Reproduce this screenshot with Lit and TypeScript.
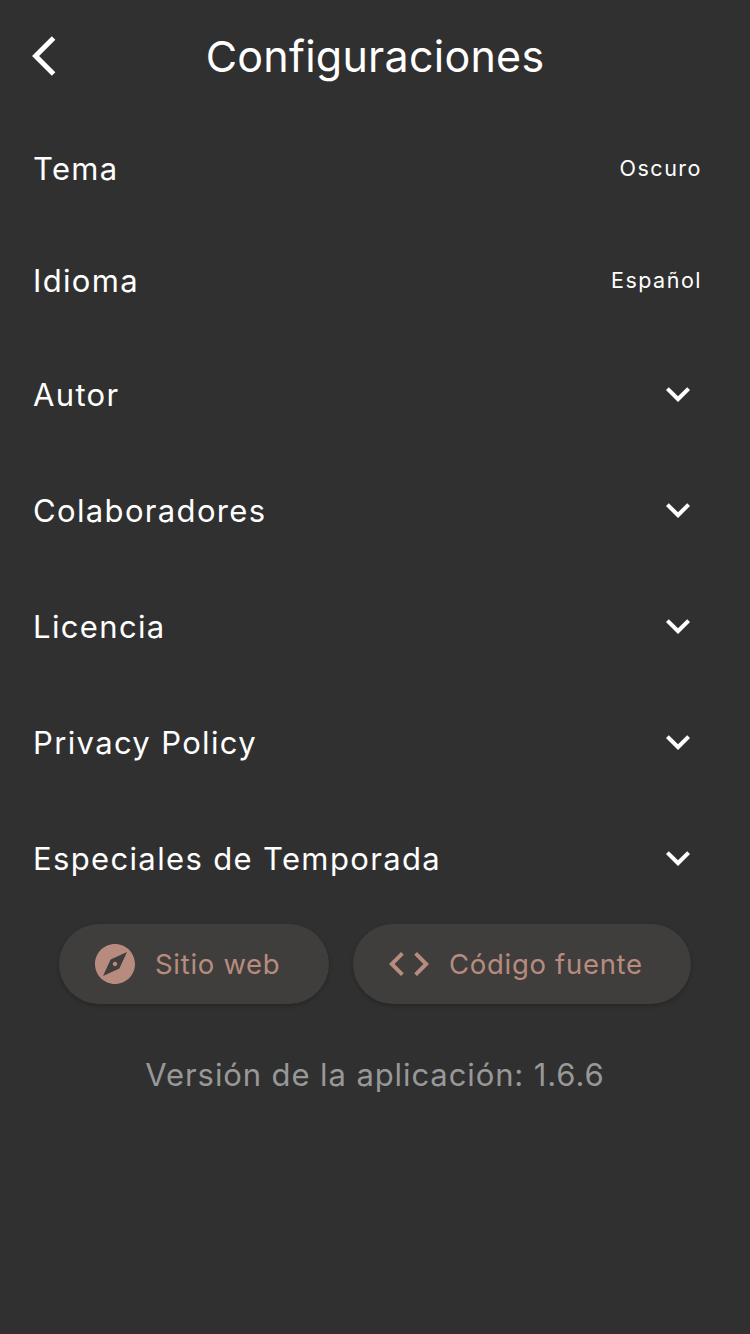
import { LitElement, html, css, svg } from "lit";
import { customElement } from "lit/decorators.js";

const icons = {
  back: svg`<path d="M11.67 3.87L9.9 2.1 0 12l9.9 9.9 1.77-1.77L3.54 12z"/>`,
  expand: svg`<path d="M16.59 8.59L12 13.17 7.41 8.59 6 10l6 6 6-6z"/>`,
  explore: svg`<path d="M12 10.9c-.61 0-1.1.49-1.1 1.1s.49 1.1 1.1 1.1c.61 0 1.1-.49 1.1-1.1s-.49-1.1-1.1-1.1zM12 2C6.48 2 2 6.48 2 12s4.48 10 10 10 10-4.48 10-10S17.52 2 12 2zm2.19 12.19L6 18l3.81-8.19L18 6l-3.81 8.19z"/>`,
  code: svg`<path d="M9.4 16.6L4.8 12l4.6-4.6L8 6l-6 6 6 6 1.4-1.4zm5.2 0l4.6-4.6-4.6-4.6L16 6l6 6-6 6-1.4-1.4z"/>`,
};

const icon = (name: keyof typeof icons) =>
  html`<svg class="icon" viewBox="0 0 24 24" aria-hidden="true">${icons[name]}</svg>`;

@customElement("app-root")
export class AppRoot extends LitElement {
  static styles = css`
    :host {
      display: flex;
      flex-direction: column;
      box-sizing: border-box;
      height: 1334px;
      background: #303030;
      border-bottom: 1px solid #392e35;
      color: #fff;
      font-family: Inter, "Liberation Sans", sans-serif;
      font-weight: 400;
      white-space: nowrap;
    }
    .icon { width: 48px; height: 48px; flex: none; fill: currentColor; display: block; }
    .header {
      display: grid;
      grid-template-columns: 48px 1fr 48px;
      align-items: center;
      height: 112px;
      padding: 0 32px;
      box-sizing: border-box;
    }
    .title {
      margin: 0;
      text-align: center;
      font-size: 43px;
      font-weight: 400;
      letter-spacing: 0.25px;
    }
    .row {
      display: flex;
      align-items: center;
      justify-content: space-between;
      box-sizing: border-box;
      height: 112px;
      padding: 0 48px 0 33px;
    }
    .row.fold { height: 116px; }
    .label { font-size: 31px; letter-spacing: 1.35px; padding-top: 1px; }
    .value { font-size: 21.5px; letter-spacing: 1.5px; }
    .row .icon { margin-bottom: 1px; }
    .list { display: flex; flex-direction: column; }
    .buttons { display: flex; justify-content: center; gap: 24px; margin-top: 8px; }
    .button {
      display: flex;
      align-items: center;
      gap: 16px;
      box-sizing: border-box;
      height: 80px;
      padding: 0 32px;
      border: 0;
      border-radius: 40px;
      background: #403e3c;
      color: #b78c7f;
      font: 400 27.5px Inter, "Liberation Sans", sans-serif;
      letter-spacing: 0.7px;
      box-shadow: 0 2px 4px rgba(0, 0, 0, 0.22);
    }
    .site { width: 270px; }
    .source { width: 338px; }
    .version {
      margin: 51px 0 0;
      text-align: center;
      font-size: 31px;
      line-height: 40px;
      letter-spacing: 0.9px;
      color: #989898;
    }
  `;

  private values = [["Tema", "Oscuro"], ["Idioma", "Español"]];
  private sections = ["Autor", "Colaboradores", "Licencia", "Privacy Policy", "Especiales de Temporada"];

  render() {
    return html`
      <header class="header">${icon("back")}<h1 class="title">Configuraciones</h1></header>
      <main class="list">
        ${this.values.map(([label, value]) => html`
          <div class="row"><span class="label">${label}</span><span class="value">${value}</span></div>`)}
        ${this.sections.map((label) => html`
          <div class="row fold"><span class="label">${label}</span>${icon("expand")}</div>`)}
      </main>
      <div class="buttons">
        <button class="button site">${icon("explore")}<span>Sitio web</span></button>
        <button class="button source">${icon("code")}<span>Código fuente</span></button>
      </div>
      <p class="version">Versión de la aplicación: 1.6.6</p>
    `;
  }
}
